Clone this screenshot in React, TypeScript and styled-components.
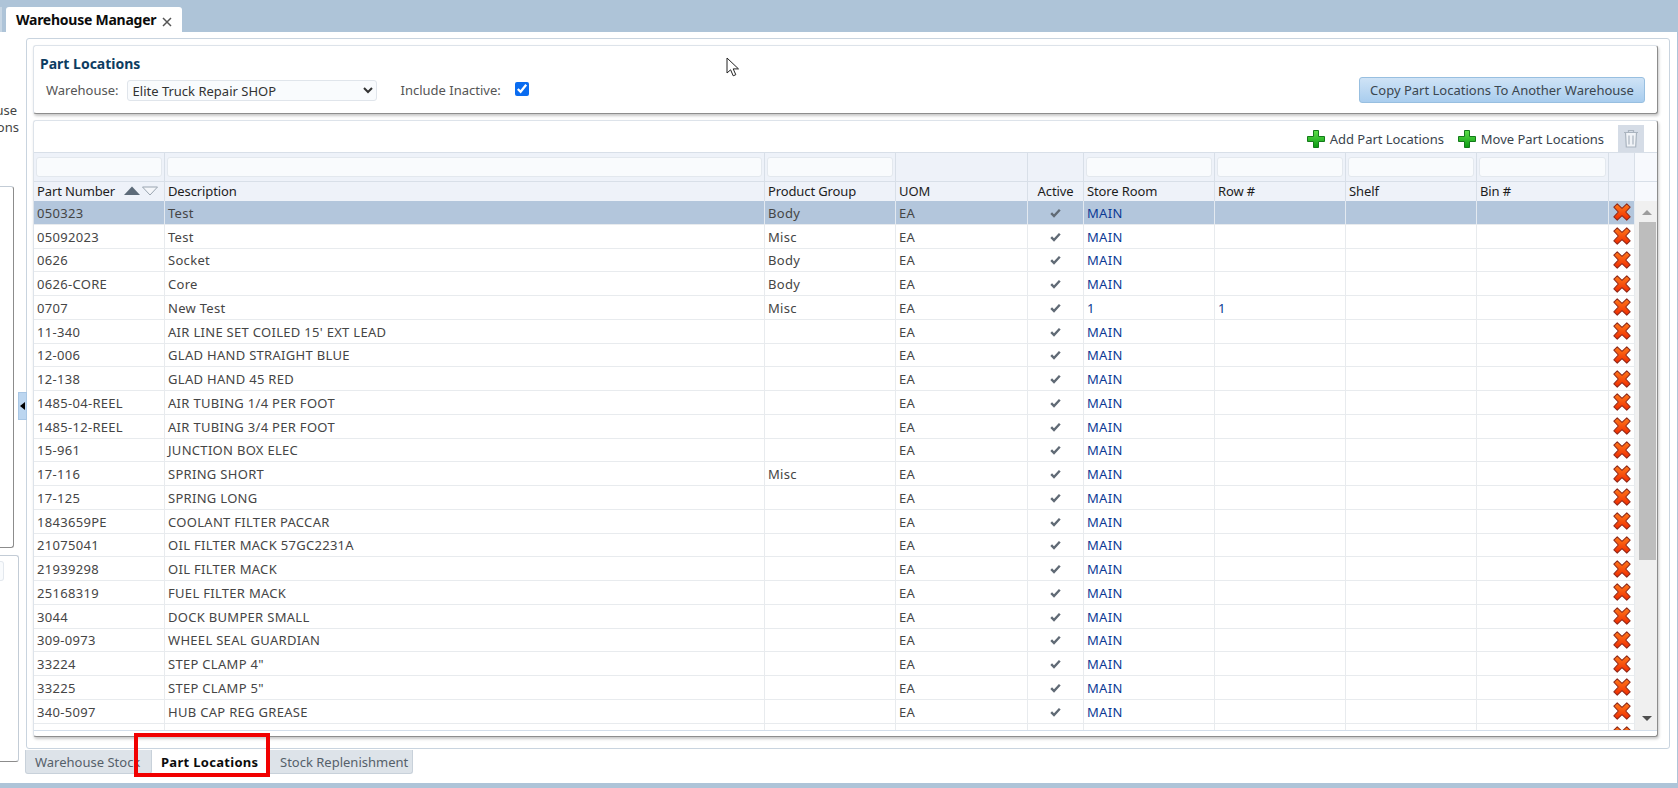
import React from "react";
import styled, { createGlobalStyle } from "styled-components";

const FONT = `"Noto Sans", "Liberation Sans", Arial, sans-serif`;
const COLS = "131px 600px 131px 132px 56px 131px 131px 131px 132px 26px";

const Global = createGlobalStyle`
  html, body { margin: 0; padding: 0; background: #aec4d8; }
  body { font-family: ${FONT}; font-size: 13px; color: #333; overflow: hidden; }
  * { box-sizing: border-box; }
`;

const Page = styled.div`
  position: relative;
  width: 1678px;
  height: 788px;
  display: flex;
  flex-direction: column;
  overflow: hidden;
  background: #aec4d8;
`;
const TopBar = styled.div`
  height: 32px;
  flex: none;
  display: flex;
  align-items: flex-end;
  gap: 4px;
`;
const TabStub = styled.div`
  width: 2px;
  height: 25px;
  background: #c7d6e4;
`;
const MainTab = styled.div`
  width: 176px;
  height: 25px;
  background: #fff;
  border-radius: 3px 3px 0 0;
  display: flex;
  align-items: center;
  padding: 0 0 0 10px;
  gap: 6px;
  font-weight: 700;
  font-size: 14px;
  letter-spacing: -0.25px;
  color: #0c0c0c;
  white-space: nowrap;
`;
const CloseGlyph = styled.svg`
  width: 10px;
  height: 10px;
  margin-top: 5px;
  flex: none;
`;
const Body = styled.div`
  height: 751px;
  width: 1677px;
  flex: none;
  background: #fff;
  display: flex;
  position: relative;
`;
const Rail = styled.div`
  width: 26px;
  flex: none;
  display: flex;
  flex-direction: column;
  overflow: hidden;
`;
const RailLabels = styled.div`
  margin-top: 70px;
  height: 34px;
  display: flex;
  flex-direction: column;
`;
const RailLabel = styled.div<{ $end: number }>`
  width: ${(p) => p.$end}px;
  height: 17px;
  line-height: 17px;
  font-size: 13px;
  color: #444;
  display: flex;
  justify-content: flex-end;
`;
const RailPanelTop = styled.div`
  margin-top: 50px;
  width: 14px;
  height: 362px;
  background: #fff;
  border: 1px solid #c3ccd6;
  border-left: 0;
  border-right: 1px solid #8c8c8c;
  border-bottom: 1px solid #8c8c8c;
  border-radius: 0 3px 3px 0;
`;
const RailPanelBottom = styled.div`
  margin-top: 7px;
  width: 19px;
  height: 207px;
  background: #fff;
  border: 1px solid #c3ccd6;
  border-left: 0;
  border-bottom: 1px solid #8c8c8c;
  border-radius: 0 3px 3px 0;
  padding-top: 5px;
`;
const RailInput = styled.div`
  width: 4px;
  height: 20px;
  background: #f9fbfd;
  border: 1px solid #e3e8ee;
  border-left: 0;
  border-radius: 0 3px 3px 0;
`;
const Splitter = styled.div`
  position: absolute;
  left: 18px;
  top: 360px;
  width: 9px;
  height: 28px;
  background: #bcd6f0;
  border: 1px solid #a8c6e4;
  display: flex;
  align-items: center;
  justify-content: center;
  z-index: 2;
`;
const SplitterArrow = styled.div`
  width: 0;
  height: 0;
  border-top: 4.5px solid transparent;
  border-bottom: 4.5px solid transparent;
  border-right: 5px solid #000;
`;
const Main = styled.div`
  flex: none;
  padding-top: 6px;
  display: flex;
  flex-direction: column;
`;
const Outer = styled.div`
  width: 1644px;
  height: 711px;
  border: 1px solid #c9d4df;
  border-radius: 3px;
  padding: 6px 11px 0 6px;
  display: flex;
  flex-direction: column;
  gap: 6px;
`;
const FormPanel = styled.div`
  height: 69px;
  width: 1625px;
  flex: none;
  background: #fff;
  border: 1px solid #dde3ea;
  border-right: 1px solid #8d8d8d;
  border-bottom: 1px solid #8d8d8d;
  border-radius: 3px;
  box-shadow: 1px 2px 3px rgba(0, 0, 0, 0.22);
  padding: 8px 12px 0 6px;
`;
const FormTitle = styled.div`
  font-weight: 700;
  font-size: 14px;
  line-height: 19px;
  color: #0d3c61;
`;
const FormRow = styled.div`
  display: flex;
  align-items: center;
  margin-top: 4px;
  height: 26px;
  padding-left: 6px;
`;
const FieldLabel = styled.label`
  font-size: 13px;
  color: #555;
  white-space: nowrap;
`;
const WarehouseSelect = styled.select`
  margin-left: 8px;
  width: 250px;
  height: 21px;
  font: 13px ${FONT};
  color: #333;
  background: #f9fbfd;
  border: 1px solid #e0e5eb;
  border-radius: 3px;
  padding: 0 0 0 1px;
`;
const InactiveLabel = styled(FieldLabel)`
  margin-left: 24px;
`;
const InactiveCheck = styled.input`
  width: 14px;
  height: 14px;
  margin: 0 0 2px 14px;
  accent-color: #0a6cf0;
`;
const CopyButton = styled.button`
  margin-left: auto;
  width: 286px;
  height: 26px;
  border: 1px solid #98bfe0;
  border-radius: 3px;
  background: linear-gradient(#cfe3f6, #a9cdee);
  font: 13px ${FONT};
  color: #3a4650;
  padding: 0;
  white-space: nowrap;
`;
const GridPanel = styled.div`
  width: 1625px;
  height: 617px;
  flex: none;
  background: #fff;
  border: 1px solid #dde3ea;
  border-right: 1px solid #8d8d8d;
  border-bottom: 1px solid #8d8d8d;
  border-radius: 3px;
  box-shadow: 1px 2px 3px rgba(0, 0, 0, 0.22);
  display: flex;
  flex-direction: column;
`;
const Toolbar = styled.div`
  height: 31px;
  flex: none;
  display: flex;
  align-items: center;
  justify-content: flex-end;
  padding: 4px 13px 0 0;
`;
const ToolAction = styled.div<{ $after: number }>`
  display: flex;
  align-items: center;
  gap: 5px;
  font-size: 13px;
  letter-spacing: -0.03px;
  color: #39444e;
  margin-right: ${(p) => p.$after}px;
  white-space: nowrap;
`;
const TrashButton = styled.div`
  width: 26px;
  height: 27px;
  margin-left: -3px;
  background: #d5dce6;
  display: flex;
  align-items: center;
  justify-content: center;
`;
const HeadRow = styled.div<{ $h: number }>`
  display: grid;
  grid-template-columns: ${COLS} 22px;
  height: ${(p) => p.$h}px;
  flex: none;
  background: #eef2f9;
  border-top: 1px solid #d8dfe8;
`;
const FilterCell = styled.div<{ $plain?: boolean }>`
  border-right: ${(p) => (p.$plain ? "0" : "1px solid #d8dfe8")};
  background: ${(p) => (p.$plain ? "#f7f9fd" : "transparent")};
  display: flex;
  align-items: center;
  padding: 0 2px 1px;
`;
const HeadCell = styled.div<{ $center?: boolean; $plain?: boolean }>`
  border-right: ${(p) => (p.$plain ? "0" : "1px solid #d8dfe8")};
  background: ${(p) => (p.$plain ? "#f7f9fd" : "transparent")};
  display: flex;
  align-items: center;
  justify-content: ${(p) => (p.$center ? "center" : "flex-start")};
  padding: 0 3px 2px;
  font-size: 13px;
  letter-spacing: -0.12px;
  color: #1d1d1d;
  white-space: nowrap;
`;
const FilterInput = styled.div`
  width: 100%;
  height: 20px;
  background: #f9fbfd;
  border: 1px solid #e3e8ee;
  border-radius: 3px;
`;
const SortIcon = styled.svg`
  margin-left: 9px;
  width: 34px;
  height: 10px;
  flex: none;
`;
const GridBody = styled.div`
  height: 530px;
  flex: none;
  display: flex;
  border-bottom: 1px solid #d3deea;
`;
const Rows = styled.div`
  width: 1601px;
  flex: none;
  overflow: hidden;
`;
const Row = styled.div<{ $selected?: boolean }>`
  display: grid;
  grid-template-columns: ${COLS};
  height: 23.75px;
  background: ${(p) => (p.$selected ? "#b3c6dc" : "#fff")};
  border-bottom: 1px solid #e8ebee;
`;
const Cell = styled.div<{ $kind?: "link" | "center" | "icon"; $selected?: boolean }>`
  border-right: 1px solid ${(p) => (p.$selected ? "#e3e9f0" : "#e8ebee")};
  display: flex;
  align-items: center;
  justify-content: ${(p) => (p.$kind === "center" || p.$kind === "icon" ? "center" : "flex-start")};
  padding: ${(p) => (p.$kind === "icon" ? "0" : "1px 3px 0")};
  font-size: 13px;
  letter-spacing: 0.3px;
  color: ${(p) => (p.$kind === "link" ? "#0b3a94" : "#454545")};
  white-space: nowrap;
  overflow: hidden;
`;
const ScrollTrack = styled.div`
  width: 22px;
  flex: none;
  background: #f0f0f0;
  display: flex;
  flex-direction: column;
  align-items: center;
  padding: 0 0 0 2px;
`;
const ArrowUp = styled.div`
  margin-top: 9px;
  width: 0;
  height: 0;
  border-left: 5px solid transparent;
  border-right: 5px solid transparent;
  border-bottom: 5px solid #9c9c9c;
`;
const Thumb = styled.div`
  margin-top: 7px;
  width: 17px;
  height: 338px;
  background: #bdbdbd;
`;
const ArrowDown = styled.div`
  margin-top: 156px;
  width: 0;
  height: 0;
  border-left: 5px solid transparent;
  border-right: 5px solid transparent;
  border-top: 5px solid #4f4f4f;
`;
const BottomTabs = styled.div`
  position: relative;
  margin: 1px 0 0 -1px;
  height: 24px;
  display: flex;
`;
const BottomTab = styled.div<{ $w: number; $active?: boolean; $pad: number }>`
  width: ${(p) => p.$w}px;
  height: 24px;
  padding-left: ${(p) => p.$pad}px;
  display: flex;
  align-items: center;
  background: ${(p) => (p.$active ? "#fff" : "#dde3e9")};
  border: 1px solid ${(p) => (p.$active ? "#fff" : "#c8d1da")};
  border-top: 0;
  border-radius: 0 0 3px 3px;
  font-size: 13px;
  font-weight: ${(p) => (p.$active ? 700 : 400)};
  letter-spacing: ${(p) => (p.$active ? "0.3px" : "0")};
  color: ${(p) => (p.$active ? "#0c0c0c" : "#55606a")};
  white-space: nowrap;
`;
const RedMark = styled.div`
  position: absolute;
  left: 109px;
  top: -17px;
  width: 136px;
  height: 44px;
  border: 4px solid #f10000;
  pointer-events: none;
`;
const Pointer = styled.svg`
  position: absolute;
  left: 726px;
  top: 57px;
  width: 14px;
  height: 20px;
  z-index: 5;
`;

const PlusIcon = () => (
  <svg width="18" height="18" viewBox="0 0 18 18">
    <defs>
      <linearGradient id="pg" x1="0" y1="0" x2="0" y2="1">
        <stop offset="0" stopColor="#5fe04a" />
        <stop offset="1" stopColor="#0a9a12" />
      </linearGradient>
    </defs>
    <path d="M6.5.5h5v6h6v5h-6v6h-5v-6h-6v-5h6z" fill="url(#pg)" stroke="#137a1a" strokeWidth="1" />
  </svg>
);

const DeleteIcon = () => (
  <svg width="18" height="18" viewBox="0 0 17 17">
    <defs>
      <linearGradient id="xg" x1="0" y1="0" x2="0" y2="1">
        <stop offset="0" stopColor="#ff7a1a" />
        <stop offset="1" stopColor="#f02a00" />
      </linearGradient>
    </defs>
    <path
      d="M4 .8 8.5 5 13 .8 16.2 4 12 8.5 16.2 13 13 16.2 8.5 12 4 16.2.8 13 5 8.5.8 4z"
      fill="url(#xg)"
      stroke="#8f2a1c"
      strokeWidth="1"
      strokeLinejoin="round"
    />
  </svg>
);

const CheckIcon = () => (
  <svg width="11" height="10" viewBox="0 0 11 10">
    <path d="M1.2 5.2 4 8 9.8 1.8" fill="none" stroke="#606a75" strokeWidth="2.4" />
  </svg>
);

const TrashIcon = () => (
  <svg width="16" height="19" viewBox="0 0 16 19" fill="#f0f3f7" stroke="#aab4bf" strokeWidth="1.2">
    <path d="M1 3.5h14M5.5 3.5V1.5h5v2" fill="none" />
    <path d="M2.5 3.5h11l-.8 14.5H3.3z" />
    <path d="M6 6.5v9M10 6.5v9" fill="none" />
  </svg>
);

const data: [string, string, string, string?, string?][] = [
  ["050323", "Test", "Body"],
  ["05092023", "Test", "Misc"],
  ["0626", "Socket", "Body"],
  ["0626-CORE", "Core", "Body"],
  ["0707", "New Test", "Misc", "1", "1"],
  ["11-340", "AIR LINE SET COILED 15' EXT LEAD", ""],
  ["12-006", "GLAD HAND STRAIGHT BLUE", ""],
  ["12-138", "GLAD HAND 45 RED", ""],
  ["1485-04-REEL", "AIR TUBING 1/4 PER FOOT", ""],
  ["1485-12-REEL", "AIR TUBING 3/4 PER FOOT", ""],
  ["15-961", "JUNCTION BOX ELEC", ""],
  ["17-116", "SPRING SHORT", "Misc"],
  ["17-125", "SPRING LONG", ""],
  ["1843659PE", "COOLANT FILTER PACCAR", ""],
  ["21075041", "OIL FILTER MACK 57GC2231A", ""],
  ["21939298", "OIL FILTER MACK", ""],
  ["25168319", "FUEL FILTER MACK", ""],
  ["3044", "DOCK BUMPER SMALL", ""],
  ["309-0973", "WHEEL SEAL GUARDIAN", ""],
  ["33224", 'STEP CLAMP 4"', ""],
  ["33225", 'STEP CLAMP 5"', ""],
  ["340-5097", "HUB CAP REG GREASE", ""],
];

const filterFlags = [true, true, true, false, false, true, true, true, true, false];
const headers = ["Description", "Product Group", "UOM", "Active", "Store Room", "Row #", "Shelf", "Bin #", ""];

export default function App() {
  return (
    <Page>
      <Global />
      <TopBar>
        <TabStub />
        <MainTab>
          Warehouse Manager
          <CloseGlyph viewBox="0 0 10 10">
            <path d="M1 1l8 8M9 1L1 9" stroke="#555" strokeWidth="1.5" />
          </CloseGlyph>
        </MainTab>
      </TopBar>
      <Body>
        <Rail>
          <RailLabels>
            <RailLabel $end={17}>use</RailLabel>
            <RailLabel $end={19}>ons</RailLabel>
          </RailLabels>
          <RailPanelTop />
          <RailPanelBottom>
            <RailInput />
          </RailPanelBottom>
        </Rail>
        <Splitter>
          <SplitterArrow />
        </Splitter>
        <Main>
          <Outer>
            <FormPanel>
              <FormTitle>Part Locations</FormTitle>
              <FormRow>
                <FieldLabel>Warehouse:</FieldLabel>
                <WarehouseSelect defaultValue="shop">
                  <option value="shop">Elite Truck Repair SHOP</option>
                </WarehouseSelect>
                <InactiveLabel>Include Inactive:</InactiveLabel>
                <InactiveCheck type="checkbox" defaultChecked />
                <CopyButton>Copy Part Locations To Another Warehouse</CopyButton>
              </FormRow>
            </FormPanel>
            <GridPanel>
              <Toolbar>
                <ToolAction $after={14}>
                  <PlusIcon />
                  Add Part Locations
                </ToolAction>
                <ToolAction $after={17}>
                  <PlusIcon />
                  Move Part Locations
                </ToolAction>
                <TrashButton>
                  <TrashIcon />
                </TrashButton>
              </Toolbar>
              <HeadRow $h={29}>
                {filterFlags.map((f, i) => (
                  <FilterCell key={i}>{f && <FilterInput />}</FilterCell>
                ))}
                <FilterCell $plain />
              </HeadRow>
              <HeadRow $h={20}>
                <HeadCell>
                  Part Number
                  <SortIcon viewBox="0 0 34 10">
                    <path d="M0 9 8 .5 16 9z" fill="#5d6b79" />
                    <path d="M18.5 1h15L26 9z" fill="#f4f6fa" stroke="#9aa5b0" />
                  </SortIcon>
                </HeadCell>
                {headers.map((h, i) => (
                  <HeadCell key={i} $center={h === "Active"}>
                    {h}
                  </HeadCell>
                ))}
                <HeadCell $plain />
              </HeadRow>
              <GridBody>
                <Rows>
                  {data.map(([part, desc, group, room, rowNo], i) => {
                    const sel = i === 0;
                    return (
                      <Row key={part} $selected={sel}>
                        <Cell $selected={sel}>{part}</Cell>
                        <Cell $selected={sel}>{desc}</Cell>
                        <Cell $selected={sel}>{group}</Cell>
                        <Cell $selected={sel}>EA</Cell>
                        <Cell $selected={sel} $kind="center">
                          <CheckIcon />
                        </Cell>
                        <Cell $selected={sel} $kind="link">
                          {room ?? "MAIN"}
                        </Cell>
                        <Cell $selected={sel} $kind="link">
                          {rowNo ?? ""}
                        </Cell>
                        <Cell $selected={sel} />
                        <Cell $selected={sel} />
                        <Cell $selected={sel} $kind="icon">
                          <DeleteIcon />
                        </Cell>
                      </Row>
                    );
                  })}
                  <Row>
                    <Cell />
                    <Cell />
                    <Cell />
                    <Cell />
                    <Cell />
                    <Cell />
                    <Cell />
                    <Cell />
                    <Cell />
                    <Cell $kind="icon">
                      <DeleteIcon />
                    </Cell>
                  </Row>
                </Rows>
                <ScrollTrack>
                  <ArrowUp />
                  <Thumb />
                  <ArrowDown />
                </ScrollTrack>
              </GridBody>
            </GridPanel>
          </Outer>
          <BottomTabs>
            <BottomTab $w={127} $pad={9}>Warehouse Stock</BottomTab>
            <BottomTab $w={115} $pad={8} $active>Part Locations</BottomTab>
            <BottomTab $w={146} $pad={12}>Stock Replenishment</BottomTab>
            <RedMark />
          </BottomTabs>
        </Main>
      </Body>
      <Pointer viewBox="0 0 14 20">
        <path d="M1 1v15l3.6-3.2 2.6 6 2.6-1.1-2.6-5.8H12.5z" fill="#fff" stroke="#222" strokeWidth="1" strokeLinejoin="round" />
      </Pointer>
    </Page>
  );
}
